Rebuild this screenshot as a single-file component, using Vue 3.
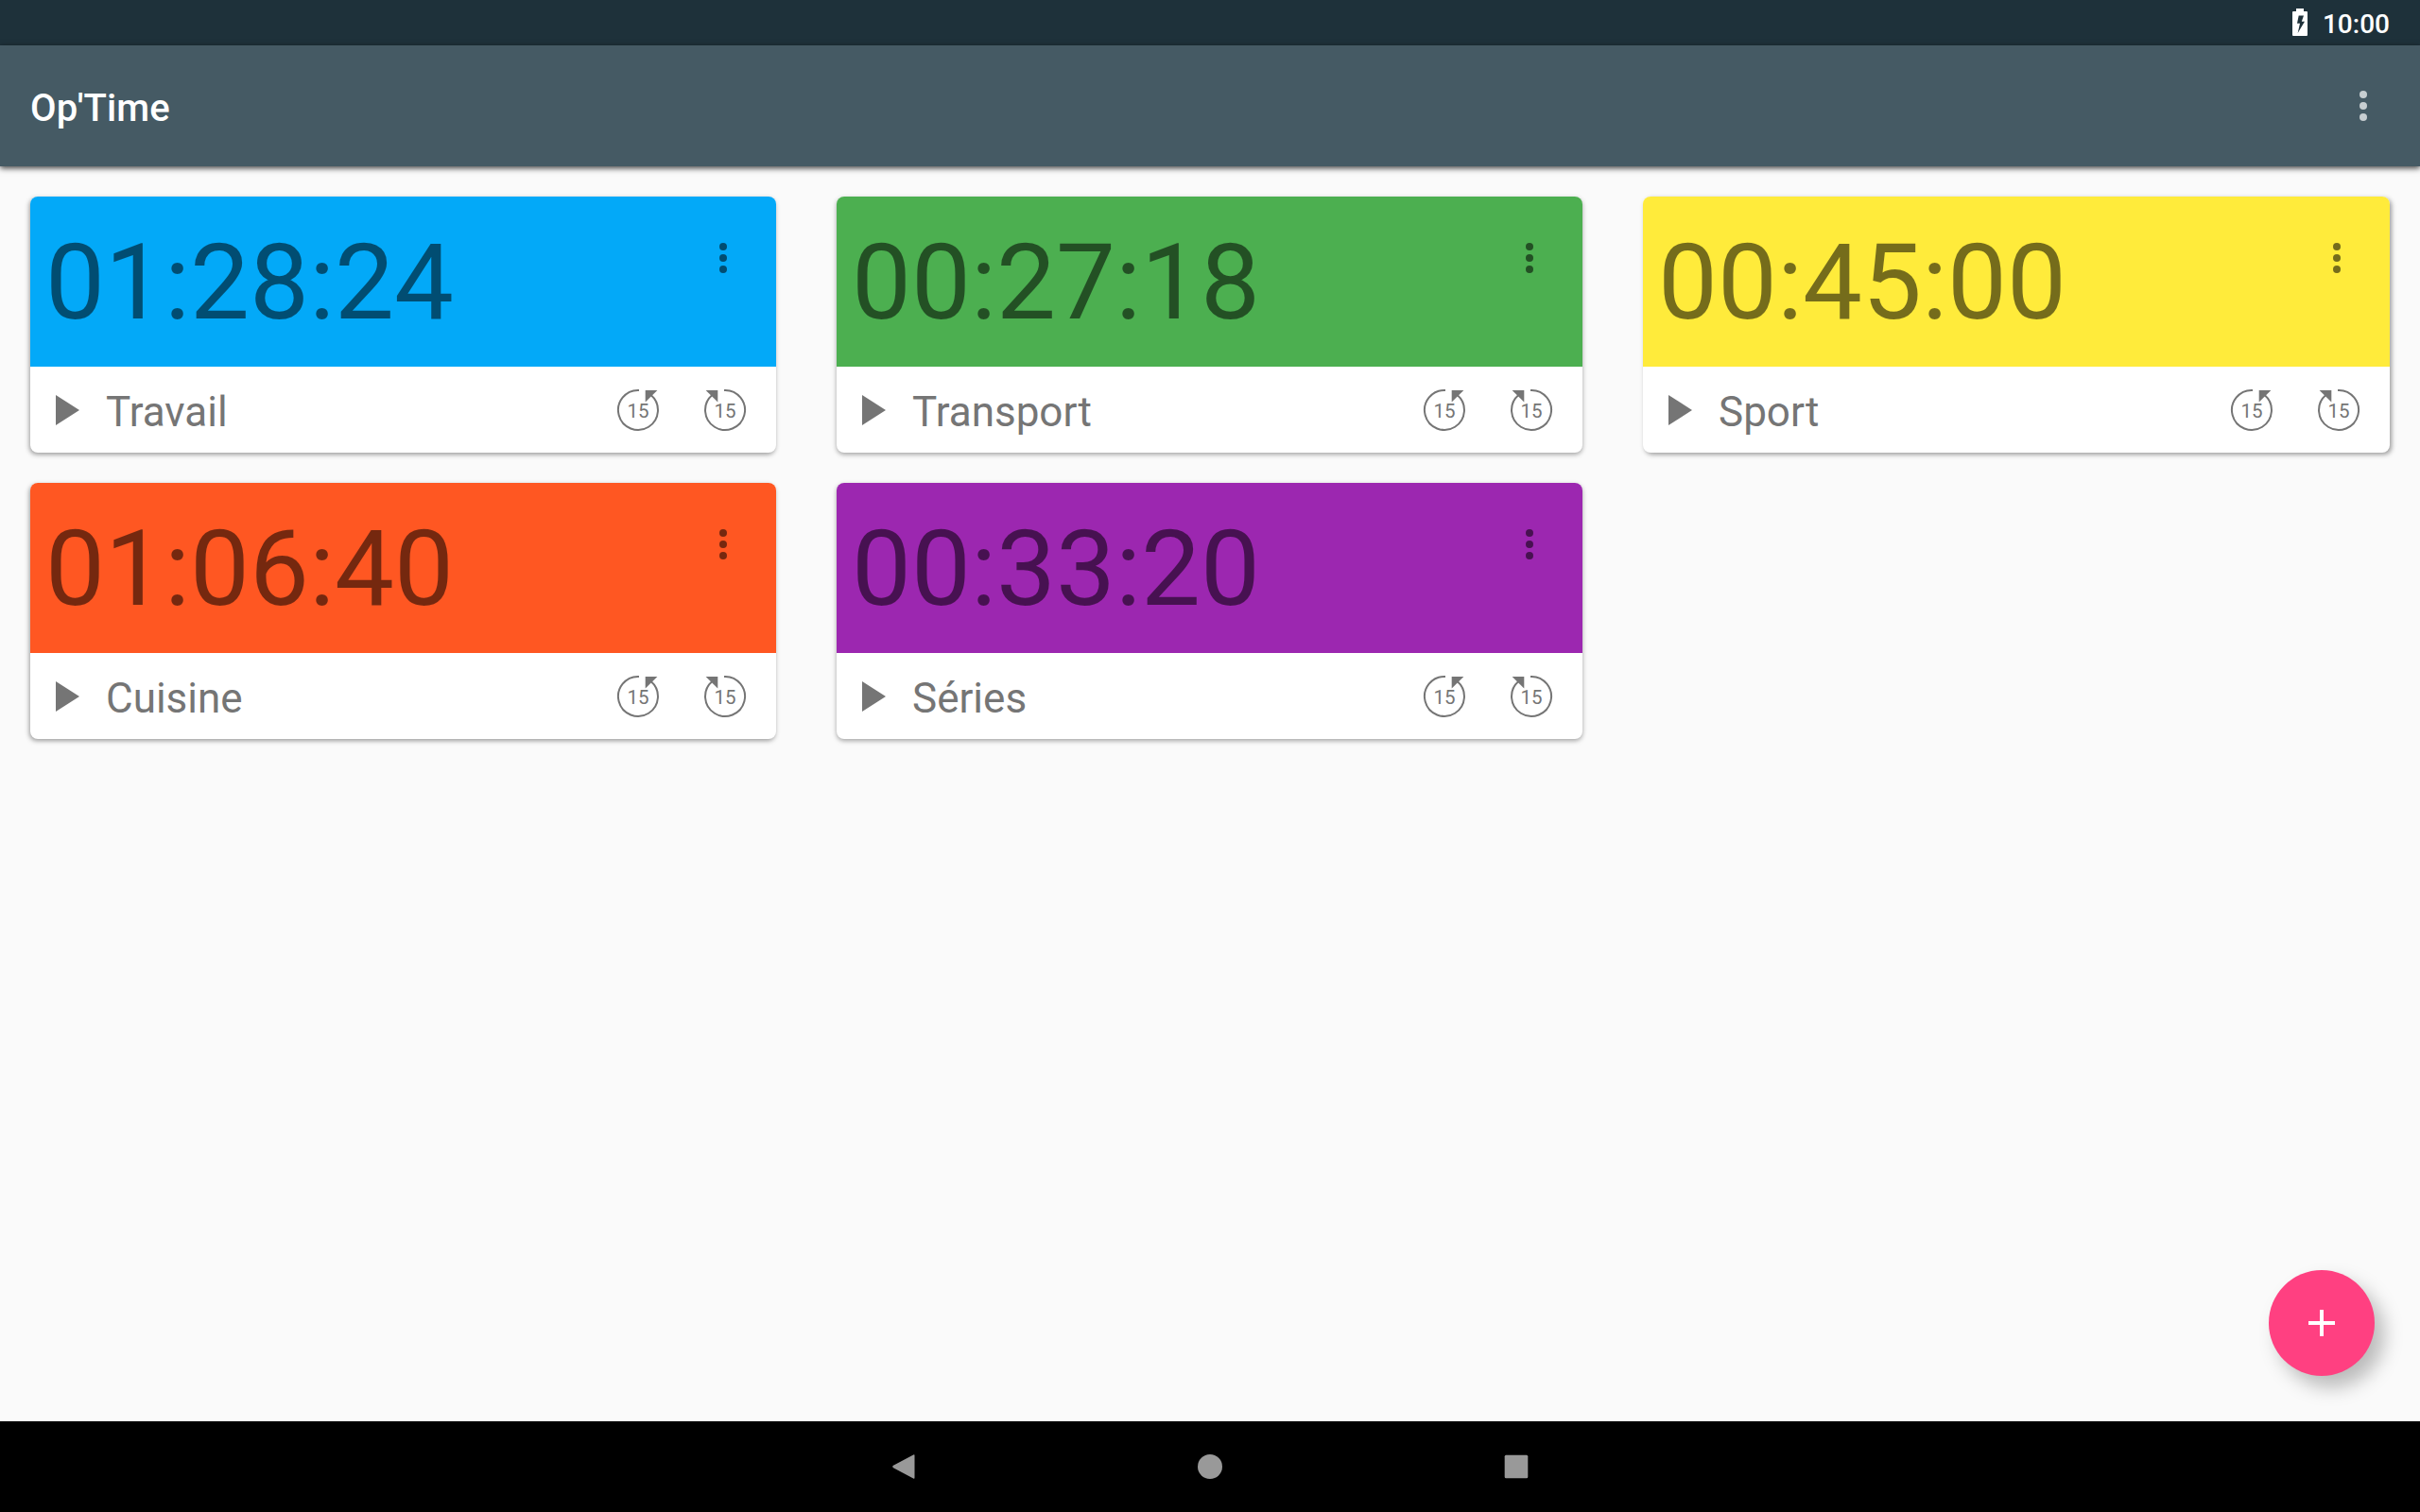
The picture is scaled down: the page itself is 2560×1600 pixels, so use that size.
<script setup>
const timers = [
  { name: 'Travail', time: '01:28:24', color: '#03a9f8' },
  { name: 'Transport', time: '00:27:18', color: '#4caf50' },
  { name: 'Sport', time: '00:45:00', color: '#ffeb3b' },
  { name: 'Cuisine', time: '01:06:40', color: '#ff5722' },
  { name: 'Séries', time: '00:33:20', color: '#9c27b0' },
]
</script>

<template>
  <div class="screen">
    <div class="status">
      <svg class="battery" width="16" height="29" viewBox="0 0 16 29">
        <path fill="#fff" fill-rule="evenodd" d="M4 0h8v3h3q1 0 1 1v24q0 1-1 1H1q-1 0-1-1V4q0-1 1-1h3zM6.7 7.6 5 15.8h3L5.7 26 13 13.8H9.8L12 7.6z" />
      </svg>
      <span class="clock">10:00</span>
    </div>
    <header class="appbar">
      <h1>Op'Time</h1>
      <svg class="more" width="8" height="32" viewBox="0 0 8 32">
        <circle cx="4" cy="4" r="4" /><circle cx="4" cy="16" r="4" /><circle cx="4" cy="28" r="4" />
      </svg>
    </header>
    <main class="grid">
      <article v-for="t in timers" :key="t.name" class="cell">
        <div class="card">
          <div class="head" :style="{ background: t.color }">
            <span class="time">{{ t.time }}</span>
            <svg class="dots" width="8" height="32" viewBox="0 0 8 32">
              <circle cx="4" cy="4" r="4" /><circle cx="4" cy="16" r="4" /><circle cx="4" cy="28" r="4" />
            </svg>
          </div>
          <div class="foot">
            <svg class="play" width="25" height="32" viewBox="0 0 25 32"><path d="M0 0 25 16 0 32z" /></svg>
            <span class="name">{{ t.name }}</span>
            <svg class="skip" width="48" height="48" viewBox="-24 -24 48 48">
              <path class="arc" d="M1-21A21 21 0 1 0 13.6-16" />
              <path d="M7.7-21H20.4L7.7-8.6z" />
              <text x="0.1" y="8" text-anchor="middle">15</text>
            </svg>
            <svg class="skip" width="48" height="48" viewBox="-24 -24 48 48">
              <path class="arc" d="M-1-21A21 21 0 1 1-13.6-16" />
              <path d="M-7.7-21H-20.4L-7.7-8.6z" />
              <text x="0.1" y="8" text-anchor="middle">15</text>
            </svg>
          </div>
        </div>
      </article>
    </main>
    <button class="fab" aria-label="Ajouter">
      <svg width="28" height="28" viewBox="0 0 28 28"><path fill="#fff" d="M12 0h4v12h12v4H16v12h-4V16H0v-4h12z" /></svg>
    </button>
    <nav class="navbar">
      <svg width="26" height="26" viewBox="0 0 26 26"><path d="M23.2.4Q24.5-.3 24.5 1.2V24.8Q24.5 26.3 23.2 25.6L2 14.2Q.4 13 2 11.8z" /></svg>
      <svg width="26" height="26" viewBox="0 0 26 26"><circle cx="13" cy="13" r="13" /></svg>
      <svg width="26" height="26" viewBox="0 0 26 26"><rect x=".7" y=".7" width="24.6" height="24.6" rx="1.5" /></svg>
    </nav>
  </div>
</template>

<style>
body {
  margin: 0;
}
</style>

<style scoped>
.screen {
  position: relative;
  display: flex;
  flex-direction: column;
  width: 2560px;
  height: 1600px;
  overflow: hidden;
  background: #fafafa;
  font-family: Roboto, sans-serif;
}
.status {
  display: flex;
  flex: none;
  justify-content: flex-end;
  height: 48px;
  box-sizing: border-box;
  padding: 9px 32px 0 0;
  background: #1e313a;
  color: #fff;
}
.clock {
  margin: 1px 0 0 16px;
  font-size: 28px;
  font-weight: 500;
  line-height: 32px;
}
.appbar {
  z-index: 1;
  display: flex;
  flex: none;
  align-items: center;
  justify-content: space-between;
  height: 128px;
  box-sizing: border-box;
  padding: 0 56px 0 32px;
  background: #455a64;
  box-shadow: 0 2px 6px rgba(0, 0, 0, 0.75);
}
h1 {
  margin: 5px 0 0;
  color: #fff;
  font-size: 40px;
  font-weight: 500;
  letter-spacing: 0.1px;
  line-height: 48px;
}
.more {
  fill: rgba(255, 255, 255, 0.7);
}
.grid {
  display: grid;
  flex: 1;
  grid-template-columns: 853px 853px 854px;
  align-content: start;
  row-gap: 32px;
  padding-top: 32px;
}
.cell {
  padding: 0 32px;
}
.card {
  height: 271px;
  overflow: hidden;
  border-radius: 8px;
  background: #fff;
  box-shadow: 0 2px 5px rgba(0, 0, 0, 0.35);
}
.cell:nth-child(3n + 1) .card {
  box-shadow: -1px 2px 5px rgba(0, 0, 0, 0.38);
}
.cell:nth-child(3n) .card {
  box-shadow: 2px 2px 5px rgba(0, 0, 0, 0.38);
}
.head {
  display: flex;
  justify-content: space-between;
  height: 180px;
  box-sizing: border-box;
  padding: 0 52px 0 16px;
}
.time {
  color: rgba(0, 0, 0, 0.54);
  font-size: 112px;
  line-height: 182px;
}
.dots {
  margin-top: 49px;
  fill: rgba(0, 0, 0, 0.54);
}
.foot {
  display: flex;
  align-items: center;
  height: 91px;
  box-sizing: border-box;
  padding: 1px 30px 0 27px;
  color: #757575;
  fill: #757575;
}
.name {
  flex: 1;
  margin: 4px 0 0 28px;
  font-size: 44px;
  line-height: 52px;
}
.skip + .skip {
  margin-left: 44px;
}
.arc {
  fill: none;
  stroke: #757575;
  stroke-width: 2;
}
.skip text {
  font-size: 20.5px;
}
.fab {
  position: absolute;
  right: 48px;
  bottom: 144px;
  display: flex;
  align-items: center;
  justify-content: center;
  width: 112px;
  height: 112px;
  padding: 0;
  border: 0;
  border-radius: 50%;
  background: #ff4081;
  box-shadow: 10px 12px 20px rgba(0, 0, 0, 0.26);
}
.navbar {
  display: flex;
  flex: none;
  align-items: center;
  justify-content: center;
  gap: 298px;
  height: 96px;
  background: #000;
  fill: #999;
}
</style>
